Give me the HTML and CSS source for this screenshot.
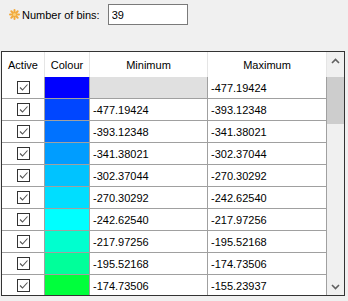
FILE: index.html
```html
<!DOCTYPE html>
<html lang="en">
<head>
    <meta charset="UTF-8">
    <title>Colour bins</title>
    <link rel="stylesheet" href="styles.css">
</head>
<body>
    <div class="bins-row">
        <svg class="star" width="11" height="11" viewBox="0 0 11 11">
            <g stroke="#f2a93b" stroke-width="2" stroke-linecap="round">
                <line x1="5.5" y1="1" x2="5.5" y2="10"/>
                <line x1="1" y1="5.5" x2="10" y2="5.5"/>
                <line x1="2.3" y1="2.3" x2="8.7" y2="8.7"/>
                <line x1="8.7" y1="2.3" x2="2.3" y2="8.7"/>
            </g>
            <circle cx="5.5" cy="5.5" r="1.6" fill="#fbd27a"/>
        </svg>
        <label class="bins-label" for="bins">Number of bins:</label>
        <input class="bins-input" id="bins" type="text" value="39">
    </div>

    <div class="table-frame">
        <div class="table-view">
            <div class="row header">
                <div class="cell c-active">Active</div>
                <div class="cell c-colour">Colour</div>
                <div class="cell c-min">Minimum</div>
                <div class="cell c-max">Maximum</div>
            </div>
            <div class="rows" id="rows"></div>
        </div>
        <div class="scrollbar">
            <div class="sb-btn">
                <svg width="9" height="6" viewBox="0 0 9 6"><polyline points="1,5 4.5,1.5 8,5" fill="none" stroke="#606060" stroke-width="1.6"/></svg>
            </div>
            <div class="sb-track">
                <div class="sb-thumb"></div>
            </div>
            <div class="sb-btn">
                <svg width="9" height="6" viewBox="0 0 9 6"><polyline points="1,1 4.5,4.5 8,1" fill="none" stroke="#606060" stroke-width="1.6"/></svg>
            </div>
        </div>
    </div>

    <script>
        // bins shown in the table: colour, min, max
        const bins = [
            ['#0000ff', '', '-477.19424'],
            ['#0046ff', '-477.19424', '-393.12348'],
            ['#0072ff', '-393.12348', '-341.38021'],
            ['#009dff', '-341.38021', '-302.37044'],
            ['#00c3ff', '-302.37044', '-270.30292'],
            ['#00deff', '-270.30292', '-242.62540'],
            ['#00ffff', '-242.62540', '-217.97256'],
            ['#00ffcf', '-217.97256', '-195.52168'],
            ['#00ff9a', '-195.52168', '-174.73506'],
            ['#00ff3c', '-174.73506', '-155.23937']
        ];

        const check = '<svg width="11" height="11" viewBox="0 0 11 11"><polyline points="2,5.5 4.5,8 9.5,2.5" fill="none" stroke="#555" stroke-width="1.1"/></svg>';
        const rows = document.getElementById('rows');

        bins.forEach(function(bin) {
            const row = document.createElement('div');
            row.className = 'row';
            row.innerHTML =
                '<div class="cell c-active"><span class="checkbox">' + check + '</span></div>' +
                '<div class="cell c-colour"><span class="swatch" style="background:' + bin[0] + '"></span></div>' +
                '<div class="cell c-min num' + (bin[1] ? '' : ' empty') + '">' + bin[1] + '</div>' +
                '<div class="cell c-max num">' + bin[2] + '</div>';
            rows.appendChild(row);
        });
    </script>
</body>
</html>
```

FILE: styles.css
```css
* {
    margin: 0;
    padding: 0;
    box-sizing: border-box;
}

body {
    background: #f0f0f0;
    font-family: 'Liberation Sans', Arial, sans-serif;
    font-size: 11px;
    color: #000;
    width: 348px;
    height: 301px;
    overflow: hidden;
}

/* number of bins */
.bins-row {
    display: flex;
    align-items: center;
    height: 21px;
    margin-top: 4px;
    padding-left: 9px;
}

.star {
    display: block;
    margin-right: 2px;
}

.bins-label {
    margin-right: 8px;
}

.bins-input {
    width: 80px;
    height: 21px;
    border: 1px solid #7a7a7a;
    background: #fff;
    font: inherit;
    padding: 0 3px;
    outline: none;
}

/* table */
.table-frame {
    display: flex;
    width: 344px;
    height: 245px;
    margin: 26px 0 0 1px;
    border: 1px solid #333;
    background: #f0f0f0;
}

.table-view {
    width: 325px;
    height: 100%;
    overflow: hidden;
    background: #fff;
}

.row {
    display: flex;
    height: 22px;
}

.cell {
    display: flex;
    align-items: center;
    height: 100%;
    border-right: 1px solid #a0a0a0;
    border-bottom: 1px solid #a0a0a0;
    background: #fff;
}

.header {
    height: 25px;
}

.header .cell {
    justify-content: center;
    border-right-color: #e5e5e5;
    border-bottom: none;
}

.c-active { width: 43px; justify-content: center; }
.c-colour { width: 45px; }
.c-min { width: 118px; }
.c-max { width: 119px; }

.num {
    padding-left: 3px;
}

.num.empty {
    background: #e0e0e0;
}

.checkbox {
    display: flex;
    align-items: center;
    justify-content: center;
    width: 13px;
    height: 13px;
    border: 1px solid #333;
    background: #fff;
}

.swatch {
    display: block;
    width: 100%;
    height: 100%;
}

/* scrollbar */
.scrollbar {
    display: flex;
    flex-direction: column;
    width: 17px;
    height: 100%;
    background: #f0f0f0;
}

.sb-btn {
    display: flex;
    align-items: center;
    justify-content: center;
    height: 17px;
}

.sb-track {
    flex: 1;
}

.sb-thumb {
    height: 47px;
    margin-top: 8px;
    background: #cdcdcd;
}
```
